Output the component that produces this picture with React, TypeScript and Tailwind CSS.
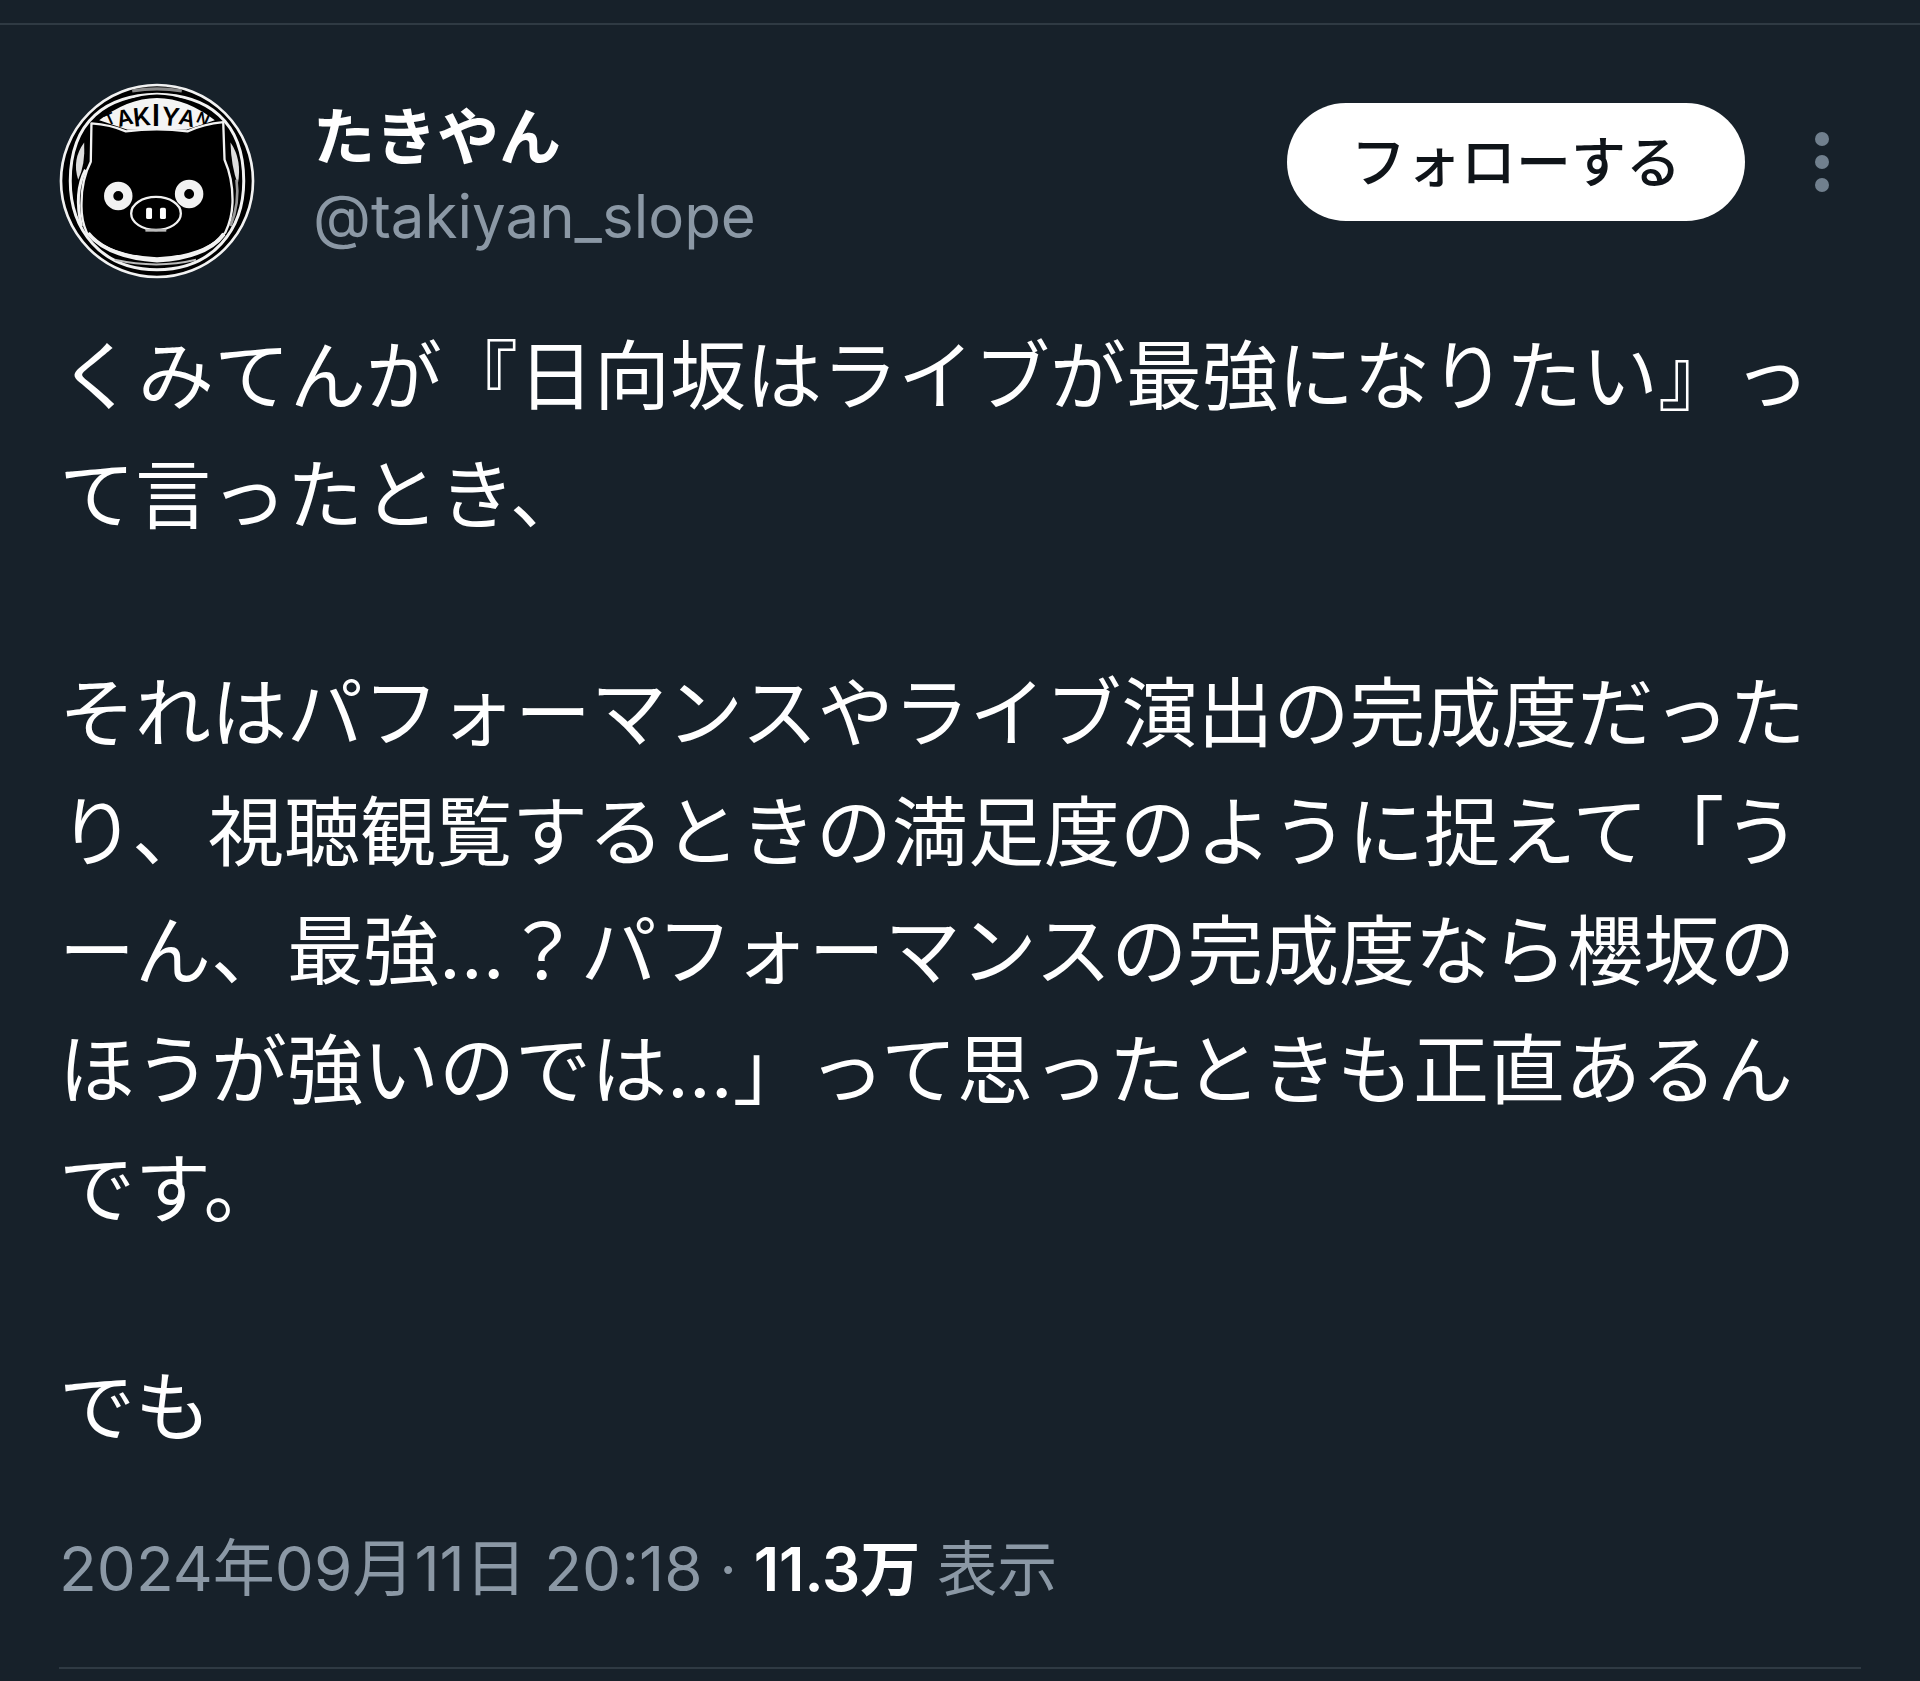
const fanLetters = [
  { char: "T", x: 214, y: 162, size: 48, turn: -24 },
  { char: "A", x: 258, y: 166, size: 66, turn: -14 },
  { char: "K", x: 307, y: 167, size: 76, turn: -6 },
  { char: "I", x: 347, y: 167, size: 92, turn: 0 },
  { char: "Y", x: 388, y: 167, size: 76, turn: 6 },
  { char: "A", x: 436, y: 166, size: 66, turn: 14 },
  { char: "N", x: 482, y: 162, size: 48, turn: 24 },
];

function Avatar() {
  return (
    <svg
      viewBox="54 38 592 592"
      className="size-[196px] shrink-0"
      role="img"
      aria-label="たきやんのアイコン"
      fill="none"
      stroke="#f2f2f2"
    >
      {/* coin rim */}
      <circle cx="350" cy="334" r="290" fill="#000" strokeWidth="8" />
      <path d="M275 62 Q350 50 425 62" stroke="#888" strokeWidth="10" />
      <path
        d="M88 334 C88 150 200 74 350 72 C500 74 612 150 612 334 C612 480 520 602 350 602 C180 602 88 480 88 334 Z"
        strokeWidth="9"
      />

      {/* lettered fan above the head */}
      <path d="M165 152 Q350 4 535 152 L440 184 H260 Z" fill="#f4f4f4" stroke="#000" strokeWidth="10" />
      <g
        className="font-['Inter',sans-serif] font-semibold"
        fill="#000"
        stroke="none"
        textAnchor="middle"
      >
        {fanLetters.map(({ char, x, y, size, turn }) => (
          <text key={x} x={x} y={y} fontSize={size} transform={`rotate(${turn} ${x} ${y})`}>
            {char}
          </text>
        ))}
      </g>

      {/* side highlights */}
      <path d="M130 218 Q92 270 112 330 Q134 284 130 218 Z" fill="#ddd" stroke="none" />
      <path d="M134 300 Q98 370 122 470" strokeWidth="9" />
      <path d="M572 218 Q608 270 594 344 Q574 290 572 218 Z" fill="#ddd" stroke="none" />
      <path d="M590 330 Q600 400 572 470" stroke="#999" strokeWidth="8" />

      {/* head */}
      <path
        d="M152 160 Q210 164 256 184 Q350 172 442 184 Q490 162 550 156 L554 270 Q580 330 578 400 Q576 450 556 490 Q500 560 350 568 Q200 560 138 490 Q120 450 122 400 Q122 330 150 276 Z"
        fill="#000"
        strokeWidth="7"
        strokeLinejoin="round"
      />
      <path d="M142 492 Q200 564 350 574 Q500 566 552 494" strokeWidth="12" />
      <path d="M222 572 Q350 600 468 572" stroke="#bbb" strokeWidth="6" />

      {/* face */}
      <circle cx="233" cy="379" r="29" strokeWidth="28" />
      <circle cx="447" cy="373" r="29" strokeWidth="28" />
      <ellipse cx="347" cy="432" rx="75" ry="50" strokeWidth="7" />
      <path d="M315 483 H378" stroke="#bbb" strokeWidth="8" />
      <g fill="#fff" stroke="none">
        <rect x="317" y="415" width="18" height="34" rx="5" />
        <rect x="359" y="415" width="18" height="34" rx="5" />
      </g>
    </svg>
  );
}

const paragraphs = [
  "くみてんが『日向坂はライブが最強になりたい』って言ったとき、",
  "それはパフォーマンスやライブ演出の完成度だったり、視聴観覧するときの満足度のように捉えて「うーん、最強…？パフォーマンスの完成度なら櫻坂のほうが強いのでは…」って思ったときも正直あるんです。",
  "でも",
];

export default function App() {
  return (
    <main
      lang="ja"
      className="min-h-screen bg-[#17212a] pt-[23px] font-['Inter','Noto_Sans_CJK_JP',sans-serif] text-white"
    >
      <article className="border-t-2 border-[#2f3a43] px-[59px] pt-[58px]">
        <header className="flex items-start">
          <Avatar />
          <div className="ml-[58px] min-w-0 flex-1 pt-4">
            <h1 className="text-[62px] leading-[78px] font-bold">たきやん</h1>
            <a href="#profile" className="block text-[60px] leading-[78px] text-[#8b98a5]">
              @takiyan_slope
            </a>
          </div>
          <div className="flex items-center pt-5">
            <button
              type="button"
              className="h-[118px] rounded-full bg-white px-16 text-[55px] leading-none font-medium text-[#0f1419]"
            >
              フォローする
            </button>
            <button type="button" aria-label="その他" className="ml-[70px] mr-[32px] text-[#71808e]">
              <svg viewBox="0 0 14 60" className="h-[60px] w-[14px]" fill="currentColor">
                <circle cx="7" cy="7" r="7" />
                <circle cx="7" cy="30" r="7" />
                <circle cx="7" cy="53" r="7" />
              </svg>
            </button>
          </div>
        </header>

        <div className="mt-[38px] flex flex-col gap-[99px] pr-6 text-[76px] leading-[119px] [line-break:loose]">
          {paragraphs.map((text) => (
            <p key={text}>{text}</p>
          ))}
        </div>

        <footer className="mt-[62px] border-b-2 border-[#2f3a43] pb-[58px] text-[62px] leading-[80px] text-[#8b98a5]">
          <time dateTime="2024-09-11T20:18">2024年09月11日 20:18</time>
          <span className="text-[60px]">
            {" · "}
            <strong className="font-semibold text-white">11.3万</strong> 表示
          </span>
        </footer>
      </article>
    </main>
  );
}
